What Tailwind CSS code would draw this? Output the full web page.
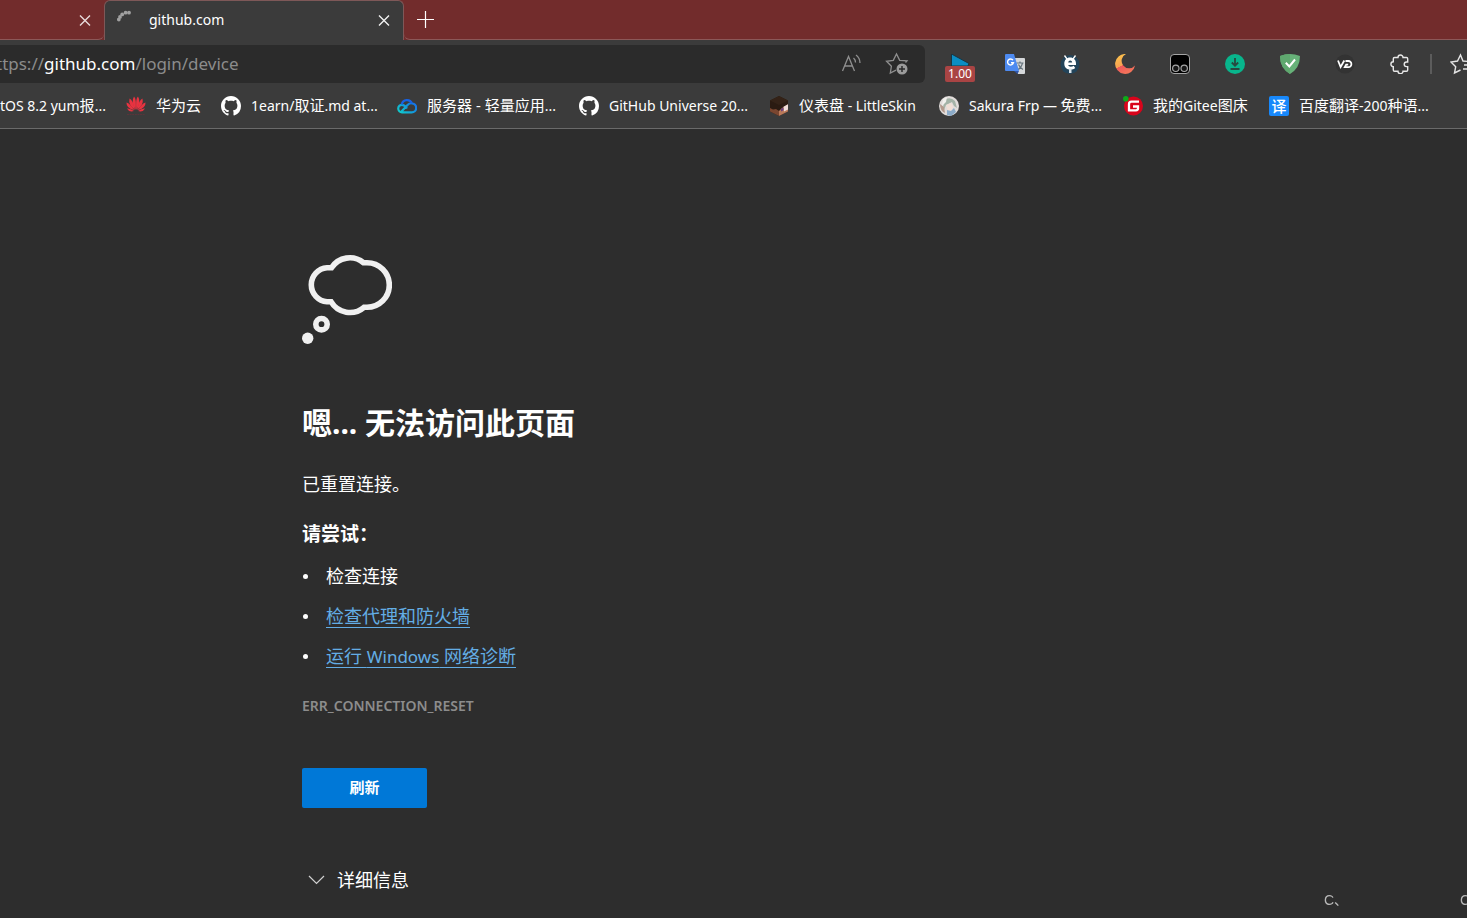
<!DOCTYPE html>
<html lang="zh-CN">
<head>
<meta charset="utf-8">
<meta name="viewport" content="width=device-width, initial-scale=1">
<title>github.com</title>
<script src="https://cdn.jsdelivr.net/npm/@tailwindcss/browser@4"></script>
</head>
<body class="min-h-screen flex flex-col overflow-hidden bg-[#2d2d2d] text-white font-['Noto_Sans','Noto_Sans_CJK_SC',sans-serif]">

<!-- Tab strip -->
<div class="flex h-10 bg-[#722c2c]">
  <div class="flex w-[104px] shrink-0 items-center justify-end border-b border-[#8c5858] pr-3 rounded-br-md">
    <button aria-label="关闭标签页" class="size-[14px]"><svg viewBox="0 0 14 14" class="size-[14px]" fill="none" stroke="#e8dcdc" stroke-width="1.4"><path d="M2 2.500 12 12.500M12 2.500 2 12.500"/></svg></button>
  </div>
  <div class="flex w-[300px] shrink-0 items-center rounded-t-md border border-b-0 border-[#7e5858] bg-[#3b3b3b] pb-px pl-3 pr-3">
    <svg viewBox="0 0 16 16" class="size-4 shrink-0 -mt-1" fill="#a0a0a0"><circle cx="1.800" cy="9.600" r="1.900"/><circle cx="3" cy="6.900" r="1.900"/><circle cx="5.200" cy="4.400" r="1.900"/><circle cx="8.600" cy="2.700" r="1.900"/><circle cx="12" cy="2.700" r="1.900"/></svg>
    <span class="ml-4 flex-1 text-sm">github.com</span>
    <button aria-label="关闭标签页" class="size-[14px]"><svg viewBox="0 0 14 14" class="size-[14px]" fill="none" stroke="#f2f2f2" stroke-width="1.4"><path d="M2 2.500 12 12.500M12 2.500 2 12.500"/></svg></button>
  </div>
  <div class="flex flex-1 items-center rounded-bl-md border-b border-[#8c5858] pl-3">
    <button aria-label="新建标签页" class="size-[18px]"><svg viewBox="0 0 18 18" class="size-[18px]" fill="none" stroke="#fff" stroke-width="1.200"><path d="M9.500 0v17M1 8.500h17"/></svg></button>
  </div>
</div>

<!-- Toolbar -->
<div class="flex h-12 items-center bg-[#3b3b3b]">
  <div class="flex h-[38px] flex-1 items-center overflow-hidden rounded-r-md bg-[#2b2b2b]">
    <div class="-ml-1 flex-1 whitespace-nowrap text-[17px] text-[#8c8c8c]">ttps://<span class="text-white">github.com</span>/login/device</div>
    <button aria-label="大声朗读" class="mr-6 size-[20px]"><svg viewBox="0 0 20 20" class="size-[20px]" fill="none" stroke="#8f8f8f" stroke-width="1.300"><path d="M1.500 17 7.500 2.500 13.500 17M3.700 12h7.600M12.500 4q2 1.800 2 4.500M15 1q4 3 4 8"/></svg></button>
    <button aria-label="添加到收藏夹" class="mr-4 size-6"><svg viewBox="0 0 24 24" class="size-6" fill="none" stroke="#8f8f8f" stroke-width="1.300"><path d="M20.500 10.500 22 8.900 14.700 8.300 11.500 2 8.300 8.300 1.500 9.300 6.400 14.300 5.300 21 11 18.200"/><circle cx="17" cy="17" r="5.500" fill="#9b9b9b" stroke="none"/><path d="M17 14v6M14 17h6" stroke="#2b2b2b" stroke-width="1.500"/></svg></button>
  </div>
  <div class="flex shrink-0 items-center pl-[19px]">
    <button aria-label="播放速度 1.00" class="mr-[10px] flex w-[32px] flex-col items-center pt-[7px]"><svg viewBox="0 0 20 12" class="h-3 w-5"><path d="M1.500 0v12h16.500l1-2.500Z" fill="#0b8dc4" stroke="#173745"/></svg><span class="rounded-xs bg-[#a94444] px-[3px] text-xs/4">1.00</span></button>
    <span class="flex gap-[35px] pl-[19px]">
      <button aria-label="谷歌翻译"><svg viewBox="0 0 20 20" class="size-5"><path d="M9 4h10q1 0 1 1v14q0 1-1 1h-6Z" fill="#d5d8da"/><path d="M11.500 9h7M15 7.500V9M17.500 9q-1 4.500-5 7M13.500 10.500q1.500 3.500 4.500 5" fill="none" stroke="#65737c" stroke-width="1.200"/><path d="M9 17h5l-1.500 3Z" fill="#3056a8"/><path d="M1 0h8l5 17H1q-1 0-1-1V1q0-1 1-1Z" fill="#4d8af0"/><path d="M8 6.200A3 3 0 1 0 8.500 8.700H6" fill="none" stroke="#fff" stroke-width="1.400"/></svg></button>
      <button aria-label="e 扩展"><svg viewBox="0 0 20 20" class="size-5"><circle cx="10" cy="10.500" r="9.400" fill="#23445a"/><path d="M4.500 1.500 7 5M15.500 1.500 13 5" stroke="#fff" stroke-width="1.300"/><path fill="#fff" fill-rule="evenodd" d="M10 3.500c3.600 0 6 2.400 6 6v1.500H8.200c.3 1.200 1.200 1.700 2.500 1.700 1.200 0 2.200-.4 3-1l1.500 2.300c-1.200 1-2.800 1.600-4.700 1.600C6.800 15.600 4.300 13.200 4.300 9.700 4.300 6 6.600 3.500 10 3.500ZM8.200 8.500h4c-.1-1.300-.9-2-2-2s-1.800.7-2 2Z"/><path d="M9 14.500h2.500v4.500H9Z" fill="#dce6ec"/></svg></button>
      <button aria-label="月亮扩展"><svg viewBox="0 0 20 20" class="size-5"><defs><linearGradient id="moon" x1="0" y1="0" x2=".5" y2="1"><stop stop-color="#fbc94b"/><stop offset=".6" stop-color="#f8a052"/><stop offset=".61" stop-color="#ee5a5a"/><stop offset="1" stop-color="#f3735a"/></linearGradient></defs><path d="M11 0A7.500 7.500 0 1 0 20 11.500 10 10 0 1 1 11 0Z" fill="url(#moon)"/></svg></button>
      <button aria-label="篡改猴"><svg viewBox="0 0 20 20" class="size-5"><rect x=".5" y=".5" width="19" height="19" rx="3.500" fill="#000" stroke="#a5a5a5"/><g fill="#161616" stroke="#a5a5a5" stroke-width="1.200"><circle cx="5.800" cy="14.300" r="3.200"/><circle cx="14.200" cy="14.300" r="3.200"/></g></svg></button>
      <button aria-label="下载"><svg viewBox="0 0 20 20" class="size-5"><circle cx="10" cy="10" r="10" fill="#08b58c"/><path d="M10 4v7M6.800 8.500 10 11.700 13.200 8.500M5.500 15h9" fill="none" stroke="#27483f" stroke-width="1.800"/></svg></button>
      <button aria-label="AdGuard"><svg viewBox="0 0 20 20" class="size-5"><path d="M10 0Q15 0 20 2q0 12-10 18Q0 14 0 2 5 0 10 0Z" fill="#67b279"/><path d="M10 0v20Q0 14 0 2 5 0 10 0Z" fill="#5fa86f"/><path d="M5.800 8.800 9.300 12.500 15 5.500" fill="none" stroke="#fff" stroke-width="2"/></svg></button>
      <button aria-label="VD"><svg viewBox="0 0 20 20" class="size-5"><circle cx="10" cy="10" r="9.500" fill="#333"/><path d="M3 6.500 5.600 13 9.300 6.500M10.500 7h2.700a3 3 0 0 1 3.200 3.100 3 3 0 0 1-3.200 3.100H9.800l1.400-2.600h2" fill="none" stroke="#fff" stroke-width="1.800"/></svg></button>
      <button aria-label="扩展"><svg viewBox="0 0 20 20" class="size-5" fill="none" stroke="#e8e8e8" stroke-width="1.400"><path d="M4.500 3.500H8a2.500 2.500 0 0 1 5 0h3.500q1.200 0 1.200 1.200V8H16.500a2.300 2.300 0 0 0 0 4.600h1.200V16q0 1.200-1.200 1.200H13a2.500 2.500 0 0 1-5 0H4.500q-1.200 0-1.200-1.200v-3.400a2.400 2.400 0 0 1 0-4.800V4.700q0-1.200 1.200-1.200Z"/></svg></button>
    </span>
    <span class="ml-5 h-5 w-[2px] bg-[#5c5c5c]"></span>
    <button aria-label="收藏夹" class="ml-[18px] w-[17px] overflow-hidden"><svg viewBox="0 0 22 22" class="h-[22px] w-[22px]" fill="none" stroke="#e4e4e4" stroke-width="1.400"><path d="M18 8.500 13 8 10.500 2 7.500 8 1 9 5.700 13.700 4.500 20 10.500 17M14 12h8M13 16h9"/></svg></button>
  </div>
</div>

<!-- Favourites bar -->
<nav aria-label="收藏夹栏" class="flex h-[41px] items-center overflow-hidden border-b border-[#6a6a6a] bg-[#3b3b3b] pb-[5px] text-[15px] whitespace-nowrap">
  <a href="#" class="w-[126px] shrink-0"><span class="text-sm">tOS 8.2 yum</span>报<span class="text-sm">...</span></a>
  <a href="#" class="flex w-[95px] shrink-0 items-center gap-[10px]"><svg viewBox="0 0 20 20" class="size-5 shrink-0" fill="#e83340"><path d="M9.700 14Q4.500 6 8 .5 10.500 2 9.700 14Z"/><path d="M10.300 14Q15.500 6 12 .5 9.500 2 10.300 14Z"/><path d="M9 14Q2 9 3.500 2.500 7 4 9 14Z"/><path d="M11 14Q18 9 16.500 2.500 13 4 11 14Z"/><path d="M8.300 14.300Q0 12 .5 6.500 4 7.500 8.300 14.300Z"/><path d="M11.700 14.300Q20 12 19.500 6.500 16 7.500 11.700 14.300Z"/><path d="M8 15Q3 16.500 1 12.500 4 12 8 15Z"/><path d="M12 15Q17 16.500 19 12.500 16 12 12 15Z"/><path d="M1 18.500h18" stroke="#58343a" stroke-width="1" stroke-dasharray="2 .6"/></svg>华为云</a>
  <a href="#" class="flex w-[176px] shrink-0 items-center gap-[10px]"><svg viewBox="0 0 16 16" class="size-5 shrink-0" fill="#fff"><path d="M8 0C3.580 0 0 3.580 0 8c0 3.540 2.290 6.530 5.470 7.590.4.070.55-.17.55-.38 0-.19-.01-.82-.01-1.490-2.010.37-2.530-.49-2.690-.94-.09-.23-.48-.94-.82-1.130-.28-.15-.68-.52-.01-.53.63-.01 1.080.58 1.230.82.72 1.210 1.870.87 2.330.66.070-.52.28-.87.51-1.070-1.780-.2-3.640-.89-3.640-3.950 0-.87.31-1.590.82-2.150-.08-.2-.36-1.020.08-2.120 0 0 .67-.21 2.200.82.64-.18 1.320-.27 2-.27s1.360.09 2 .27c1.530-1.040 2.200-.82 2.200-.82.44 1.100.16 1.920.08 2.120.51.56.82 1.270.82 2.150 0 3.070-1.870 3.750-3.650 3.950.29.25.54.73.54 1.480 0 1.070-.01 1.930-.01 2.200 0 .21.15.46.55.38A8.010 8.010 0 0 0 16 8c0-4.420-3.580-8-8-8Z"/></svg><span><span class="text-sm">1earn/</span>取证<span class="text-sm">.md at...</span></span></a>
  <a href="#" class="flex w-[182px] shrink-0 items-center gap-[10px]"><svg viewBox="0 0 20 20" class="size-5 shrink-0" fill="none" stroke-width="2.200"><defs><linearGradient id="cloud" x1="0" y1=".8" x2="1" y2=".2"><stop stop-color="#10c8cc"/><stop offset="1" stop-color="#1674e8"/></linearGradient></defs><path d="M10 12.500Q7.500 8.800 5 8.800A3.700 3.700 0 0 0 5 16.300h9.500a4.500 4.500 0 0 0 .4-9Q12.500 7 10.500 9L4.500 15.500" stroke="url(#cloud)"/><path d="M4.800 8.500A5.400 5.400 0 0 1 15 7.300" stroke="#1762e3"/></svg><span>服务器 - 轻量应用<span class="text-sm">...</span></span></a>
  <a href="#" class="flex w-[190px] shrink-0 items-center gap-[10px]"><svg viewBox="0 0 16 16" class="size-5 shrink-0" fill="#fff"><path d="M8 0C3.580 0 0 3.580 0 8c0 3.540 2.290 6.530 5.470 7.590.4.070.55-.17.55-.38 0-.19-.01-.82-.01-1.490-2.010.37-2.530-.49-2.690-.94-.09-.23-.48-.94-.82-1.130-.28-.15-.68-.52-.01-.53.63-.01 1.080.58 1.230.82.72 1.210 1.870.87 2.330.66.070-.52.28-.87.51-1.070-1.780-.2-3.640-.89-3.640-3.950 0-.87.31-1.590.82-2.150-.08-.2-.36-1.020.08-2.120 0 0 .67-.21 2.200.82.64-.18 1.320-.27 2-.27s1.360.09 2 .27c1.530-1.040 2.200-.82 2.200-.82.44 1.100.16 1.920.08 2.120.51.56.82 1.270.82 2.150 0 3.070-1.870 3.750-3.650 3.950.29.25.54.73.54 1.480 0 1.070-.01 1.930-.01 2.200 0 .21.15.46.55.38A8.010 8.010 0 0 0 16 8c0-4.420-3.580-8-8-8Z"/></svg><span class="text-sm">GitHub Universe 20...</span></a>
  <a href="#" class="flex w-[170px] shrink-0 items-center gap-[10px]"><svg viewBox="0 0 20 20" class="size-5 shrink-0"><path d="M1 4.500 10 0l9 4.500v11L10 20l-9-4.500Z" fill="#2b1b12"/><path d="M1 4.500 10 0l9 4.500L10 9Z" fill="#342217"/><path d="m1 12 3 1.500 3-.5 3 2v5l-9-4.500Z" fill="#7a4630"/><path d="m10 15 3-3 6-3.500v7L10 20Z" fill="#b9795a"/><path d="m14.500 10.800 4.500-2.500v5.200l-4 2Z" fill="#f0dcd8"/><path d="m12 13 2.500-1.500v2.700L12 15.500Z" fill="#67407f"/></svg><span>仪表盘<span class="text-sm"> - LittleSkin</span></span></a>
  <a href="#" class="flex w-[184px] shrink-0 items-center gap-[10px]"><svg viewBox="0 0 20 20" class="size-5 shrink-0"><circle cx="10" cy="10" r="10" fill="#e2dddb"/><path d="M7 3q5-2 9 2l2 7-3-2-2-4-6 3-2 5Q3 7 7 3Z" fill="#a4b3a7"/><path d="M7 9l5-2 2 3-1 4-4 1Z" fill="#f1dfd6"/><path d="M1 8l4 3 1 6q-5-2-5-9Z" fill="#b49a8d"/><path d="m8 14 4 1 3-3 2 4-5 4-4-1Z" fill="#8cabc8"/><path d="m4 3 4-2-1 5-4 4Z" fill="#f2f0ed"/></svg><span><span class="text-sm">Sakura Frp — </span>免费<span class="text-sm">...</span></span></a>
  <a href="#" class="flex w-[146px] shrink-0 items-center gap-[10px]"><svg viewBox="0 0 20 20" class="size-5 shrink-0"><circle cx="10.500" cy="10" r="9.500" fill="#d9041b"/><path d="M16 5.700H8.500Q6 5.700 6 8.200v6.100h7q2 0 2-2V10.500H10" fill="none" stroke="#fff" stroke-width="2.300"/><circle cx="2.800" cy="2.800" r="2.800" fill="#0cab18"/></svg><span>我的<span class="text-sm">Gitee</span>图床</span></a>
  <a href="#" class="flex shrink-0 items-center gap-[10px]"><span class="flex size-5 shrink-0 items-center justify-center rounded-xs bg-[#1788fb] text-[15px]/5 font-medium">译</span><span>百度翻译<span class="text-sm">-200</span>种语<span class="text-sm">...</span></span></a>
</nav>

<!-- Error page -->
<main class="flex-1 pl-[302px] pt-[125px] text-lg">
  <svg viewBox="0 0 90 90" class="size-[90px]" fill="none" stroke="#f0f0f0" stroke-width="5.600" aria-hidden="true"><path d="M29.500 13.800H25A17 17 0 0 0 25 47.700H29A21.800 21.800 0 0 0 62 53.300H65A22.300 22.300 0 0 0 65 8.700H61.500A21.800 21.800 0 0 0 29.500 13.800Z"/><circle cx="19.500" cy="70.200" r="5.700"/><circle cx="5.700" cy="84.300" r="5.700" fill="#f0f0f0" stroke="none"/></svg>
  <h1 class="mt-[59px] text-[30px]/10 font-bold">嗯... 无法访问此页面</h1>
  <p class="mt-[27px] leading-7">已重置连接。</p>
  <h2 class="mt-[22px] text-[19px]/7 font-bold">请尝试：</h2>
  <ul class="mt-[14px] flex flex-col gap-3 leading-7">
    <li class="flex items-center"><span class="mr-[18px] size-[5px] rounded-full bg-white ml-px"></span>检查连接</li>
    <li class="flex items-center"><span class="mr-[18px] size-[5px] rounded-full bg-white ml-px"></span><a href="#" class="text-[#63ade5] underline decoration-1 underline-offset-4">检查代理和防火墙</a></li>
    <li class="flex items-center"><span class="mr-[18px] size-[5px] rounded-full bg-white ml-px"></span><a href="#" class="text-[#63ade5] underline decoration-1 underline-offset-4">运行 <span class="text-[17px]">Windows</span> 网络诊断</a></li>
  </ul>
  <p class="mt-[25px] text-sm/5 font-semibold text-[#8c8c8c]">ERR_CONNECTION_RESET</p>
  <button class="mt-[52px] block h-10 w-[125px] rounded-xs bg-[#0078d7] text-[15px] font-bold">刷新</button>
  <button class="mt-[58px] flex items-center gap-3 pl-[6px] leading-7"><svg viewBox="0 0 17 10" class="h-[10px] w-[17px]" fill="none" stroke="#d0d0d0" stroke-width="1.200"><path d="m1 1 7.500 7.500L16 1"/></svg>详细信息</button>
</main>

<!-- Floating input-method hints over the page -->
<div class="fixed bottom-2 left-[1324px] whitespace-nowrap font-['Liberation_Sans','Noto_Sans_CJK_SC',sans-serif] text-sm/5 text-[#b8b8b8]">C、</div>
<div class="fixed bottom-2 left-[1460px] font-['Liberation_Sans',sans-serif] text-sm/5 text-[#b8b8b8]">C</div>
</body>
</html>
